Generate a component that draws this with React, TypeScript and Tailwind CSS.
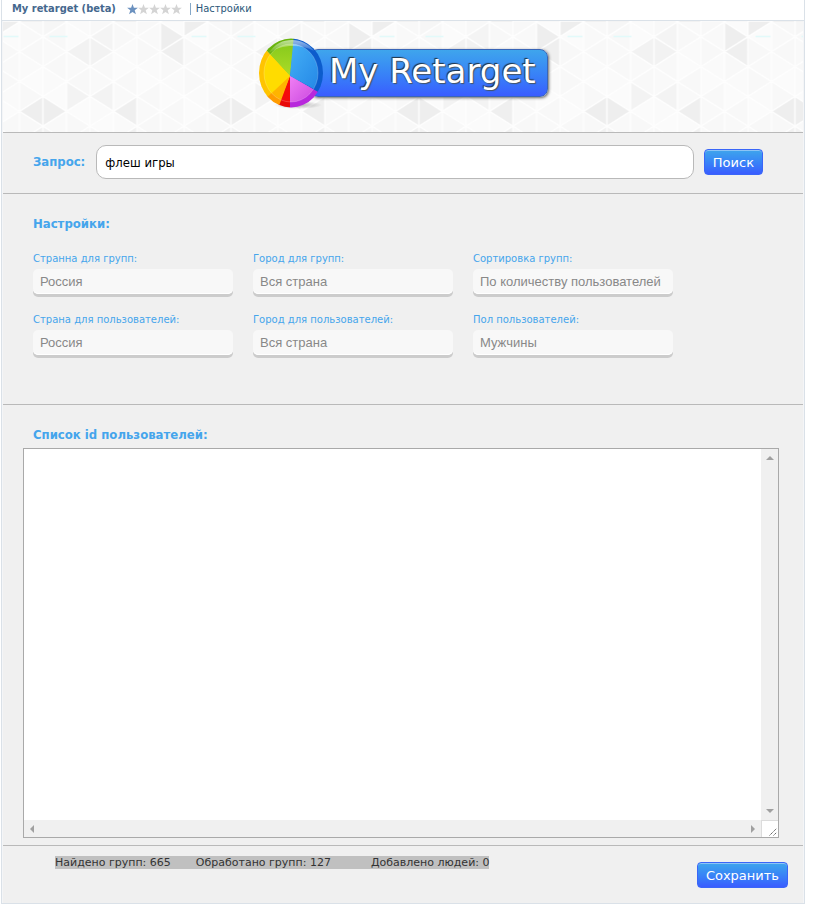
import { useState } from 'react'

// ── Data ─────────────────────────────────────────────────

interface Filter {
  id:      string
  label:   string
  options: string[]
}

const FILTERS: Filter[] = [
  { id: 'group-country', label: 'Странна для групп:',        options: ['Россия'] },
  { id: 'group-city',    label: 'Город для групп:',          options: ['Вся страна'] },
  { id: 'group-sort',    label: 'Сортировка групп:',         options: ['По количеству пользователей'] },
  { id: 'user-country',  label: 'Страна для пользователей:', options: ['Россия'] },
  { id: 'user-city',     label: 'Город для пользователей:',  options: ['Вся страна'] },
  { id: 'user-sex',      label: 'Пол пользователей:',        options: ['Мужчины', 'Женщины'] },
]

// Shaded triangles of one banner tile, keyed "strip:row"
const SHADES: Record<string, string> = {
  '0:6': '#eeeeee', '1:6': '#eeeeee', '4:6': '#efefef',
  '6:1': '#eeeeee', '6:2': '#efefef', '7:0': '#eeeeee',
  '2:2': '#f2f2f2', '3:2': '#f2f2f2', '3:1': '#f4f4f4',
  '2:5': '#f3f3f3', '3:5': '#f3f3f3', '1:0': '#f6f6f6',
  '0:8': '#f1f1f1', '1:8': '#f3f3f3', '4:8': '#f1f1f1',
}

const LIGHT = ['#f8f8f8', '#fafafa', '#f9f9f9', '#fbfbfb', '#f8f8f8']

const STRIP = 23.5
const ROW   = 14.9

// ── Pieces ───────────────────────────────────────────────

function BannerPattern() {
  const tiles = []
  for (let n = 0; n < 8; n++) {
    for (let m = 0; m < 9; m++) {
      const left  = n * STRIP
      const right = left + STRIP
      const y     = m * ROW
      const apexLeft = (n + m) % 2 === 0
      const points = apexLeft
        ? `${left},${y} ${right},${y - ROW} ${right},${y + ROW}`
        : `${right},${y} ${left},${y - ROW} ${left},${y + ROW}`
      tiles.push(
        <polygon
          key={`${n}:${m}`}
          points={points}
          fill={SHADES[`${n}:${m}`] ?? LIGHT[(n * 3 + m * 2) % 5]}
          stroke="#fefefe"
          strokeWidth="1.3"
        />,
      )
    }
  }
  return (
    <svg className="absolute inset-0 h-full w-full" aria-hidden="true">
      <defs>
        <pattern id="triangles" x="16.5" y="1" width="188" height="120" patternUnits="userSpaceOnUse">
          {tiles}
          <path d="M172 14.5h15M30 14.5h18" stroke="#e2fafa" strokeWidth="1.6" />
        </pattern>
      </defs>
      <rect width="100%" height="100%" fill="url(#triangles)" />
    </svg>
  )
}

function Wheel() {
  return (
    <svg width="68" height="74" viewBox="0 0 68 74" className="relative -mr-4 shrink-0" aria-hidden="true">
      <defs>
        <clipPath id="disc"><ellipse cx="33" cy="35" rx="32" ry="34.5" /></clipPath>
        <clipPath id="inner"><ellipse cx="33" cy="35" rx="27" ry="29" /></clipPath>
        <linearGradient id="w-green" x1="0" y1="0" x2="0" y2="1"><stop offset="0" stopColor="#7cc418" /><stop offset="1" stopColor="#acdc28" /></linearGradient>
        <linearGradient id="w-blue" x1="0" y1="0" x2="1" y2="1"><stop offset="0" stopColor="#48b4f8" /><stop offset="1" stopColor="#1878e0" /></linearGradient>
        <linearGradient id="w-pink" x1="0" y1="0" x2="1" y2="1"><stop offset="0" stopColor="#f080f4" /><stop offset="1" stopColor="#b020d0" /></linearGradient>
        <linearGradient id="w-shine" x1="0" y1="0" x2="0" y2="1"><stop offset="0" stopColor="#fff" stopOpacity=".6" /><stop offset="1" stopColor="#fff" stopOpacity="0" /></linearGradient>
        <radialGradient id="w-shadow"><stop offset="0" stopColor="#000" stopOpacity=".3" /><stop offset="1" stopColor="#000" stopOpacity="0" /></radialGradient>
      </defs>
      <ellipse cx="40" cy="67" rx="24" ry="4" fill="url(#w-shadow)" />
      <g clipPath="url(#disc)">
        <path d="M32 38 6 10 0-4h37z" fill="#68b40c" />
        <path d="M32 38 36-4h40v60L68 59z" fill="#0c5ccc" />
        <path d="M32 38 74 62v20H32z" fill="#b828dc" />
        <path d="M32 38v40H16z" fill="#e80808" />
        <path d="M32 38 18 76-2 66z" fill="#ff9c00" />
        <path d="M32 38 4 64-4 58V4l13 9z" fill="#ffc400" />
      </g>
      <g clipPath="url(#inner)">
        <path d="M32 38 6 10 0-4h37z" fill="url(#w-green)" />
        <path d="M32 38 36-4h40v66z" fill="url(#w-blue)" />
        <path d="M32 38 74 62v20H32z" fill="url(#w-pink)" />
        <path d="M32 38v40H16z" fill="#f40c0c" />
        <path d="M32 38 18 76-2 66z" fill="#ffb400" />
        <path d="M32 38 4 64-4 58V4l13 9z" fill="#ffdc00" />
      </g>
      <ellipse cx="33" cy="35" rx="27" ry="29" fill="none" stroke="#fff" strokeOpacity=".2" />
      <path d="M10 16C17 5 25 2 34 2s17 4 22 11C43 6 22 6 10 16z" fill="url(#w-shine)" />
    </svg>
  )
}

function Logo() {
  return (
    <div className="relative flex items-start">
      <Wheel />
      <div className="mt-[11px] flex h-12 w-[238px] items-center rounded-lg border border-[#3a66b8] bg-linear-to-b from-[#3fa5ec] to-[#3a5cff] pb-1 pl-[18px] shadow-[1px_1px_3px_#666]">
        <span className="font-['Comic_Sans_MS','DejaVu_Sans',sans-serif] text-[34px] leading-none whitespace-nowrap text-white [text-shadow:-1px_-1px_1px_#234,1px_1px_1px_#456]">
          My Retarget
        </span>
      </div>
    </div>
  )
}

function Stars() {
  return (
    <span className="ml-[11px] flex" role="img" aria-label="1 / 5">
      {[0, 1, 2, 3, 4].map(i => (
        <svg key={i} width="11" height="11" viewBox="0 0 11 11">
          <path
            d="M5.500 0 6.900 3.800h4L7.700 6.200 8.900 10.300 5.500 8 2.100 10.300 3.300 6.200.100 3.800h4z"
            fill={i === 0 ? '#6b91bf' : '#d4d4d4'}
          />
        </svg>
      ))}
    </span>
  )
}

function ActionButton({ children }: { children: string }) {
  return (
    <button
      type="button"
      className="h-[26px] rounded-[4px] border border-[#3a66f8] bg-linear-to-b from-[#3fa5ec] to-[#3a5cff] px-2 text-[13px] leading-none text-white shadow-[inset_0_1px_0_#8cc4f6]"
    >
      {children}
    </button>
  )
}

function Arrow({ d }: { d: string }) {
  return (
    <svg width="8" height="8" viewBox="0 0 8 8" aria-hidden="true">
      <path d={d} fill="#a0a0a0" />
    </svg>
  )
}

// ── Page ─────────────────────────────────────────────────

export default function App() {
  const [query, setQuery] = useState('флеш игры')
  const [ids, setIds]     = useState('')

  return (
    <div className="mr-5 ml-px border border-t-0 border-[#dae1e8] bg-[#f4f5f7] px-px font-['DejaVu_Sans',sans-serif]">
      {/* Title bar */}
      <header className="-mx-px flex h-[21px] items-center border-b border-[#dae1e8] bg-white pb-0.5 pl-2.5 text-[11px] text-[#45688e]">
        <h1 className="font-['DejaVu_Sans_Condensed','DejaVu_Sans',sans-serif] font-bold">My retarget (beta)</h1>
        <Stars />
        <span className="ml-2 h-3 w-px bg-[#85a8c8]" />
        <a href="#settings" className="ml-[5px] font-['DejaVu_Sans_Condensed','DejaVu_Sans',sans-serif] text-[#2b587a]">Настройки</a>
      </header>

      <div className="relative flex h-28 justify-center overflow-hidden border-b border-[#b9b9b9] bg-[#fafafa] pt-[17px]">
        <BannerPattern />
        <Logo />
      </div>

      <main className="bg-[#f0f0f0]">
        {/* Search */}
        <form className="flex h-[61px] items-center border-b border-[#b9b9b9] pr-10 pb-0.5 pl-[30px]" onSubmit={e => e.preventDefault()}>
          <label htmlFor="query" className="font-['DejaVu_Sans_Condensed','DejaVu_Sans',sans-serif] text-[13px] font-bold text-[#45a5ec]">Запрос:</label>
          <input
            id="query"
            type="text"
            value={query}
            onChange={e => setQuery(e.target.value)}
            className="mr-2.5 ml-[11px] h-[34px] min-w-0 flex-1 rounded-[10px] border border-[#b9b9b9] bg-white px-2 font-['DejaVu_Sans_Condensed','DejaVu_Sans',sans-serif] text-[13px] text-black outline-none"
          />
          <ActionButton>Поиск</ActionButton>
        </form>

        {/* Filters */}
        <section id="settings" className="h-[211px] border-b border-[#b9b9b9] px-[30px] pt-5">
          <h2 className="font-['DejaVu_Sans_Condensed','DejaVu_Sans',sans-serif] text-[13px] leading-5 font-bold text-[#45a5ec]">Настройки:</h2>
          <div className="mt-[19px] flex max-w-[660px] flex-wrap gap-x-5 gap-y-5">
            {FILTERS.map(f => (
              <div key={f.id} className="w-[200px]">
                <label htmlFor={f.id} className="block h-4 text-[10px] leading-3 whitespace-nowrap text-[#45a5ec]">{f.label}</label>
                <select
                  id={f.id}
                  className="block h-[25px] w-full appearance-none rounded-[5px] bg-[#f8f8f8] px-[7px] font-['Liberation_Sans',sans-serif] text-[13px] text-[#888] shadow-[0_3px_0_#ccc,inset_0_-1px_0_#fff] outline-none"
                >
                  {f.options.map(o => <option key={o}>{o}</option>)}
                </select>
              </div>
            ))}
          </div>
        </section>

        {/* Result list */}
        <section className="border-b border-[#b9b9b9] pt-5 pr-6 pb-[7px] pl-5">
          <label htmlFor="ids" className="block pl-2.5 font-['DejaVu_Sans_Condensed','DejaVu_Sans',sans-serif] text-[13px] leading-5 font-bold text-[#45a5ec]">Список id пользователей:</label>
          <div className="mt-[3px] grid h-[390px] grid-cols-[1fr_17px] grid-rows-[1fr_17px] border border-[#a9a9a9] bg-[#f0f0f0]">
            <textarea
              id="ids"
              value={ids}
              onChange={e => setIds(e.target.value)}
              className="resize-none overflow-hidden bg-white p-0.5 text-[13px] outline-none"
            />
            <div className="flex flex-col items-center justify-between py-[5px]">
              <Arrow d="M0 6 4 2l4 4z" />
              <Arrow d="M0 2h8L4 6z" />
            </div>
            <div className="flex items-center justify-between px-1">
              <Arrow d="M6 0v8L2 4z" />
              <Arrow d="M2 0v8l4-4z" />
            </div>
            <svg width="17" height="17" viewBox="0 0 17 17" aria-hidden="true">
              <path d="M0 0h17v17H0z" fill="#fff" />
              <path d="M0 .5h17M.5 0v17" stroke="#dcdcdc" />
              <path d="m8.500 15.500 7-7M12.500 15.500l3-3" stroke="#666" strokeDasharray="1.500 .5" />
            </svg>
          </div>
        </section>

        {/* Progress */}
        <footer className="flex h-[57px] items-start justify-between pr-[15px] pl-[52px] text-[11px]">
          <p className="mt-2.5 flex bg-[#c0c0c0] leading-[13px] whitespace-nowrap text-[#333]">
            <span className="mr-[25px]">Найдено групп: 665</span>
            <span className="mr-10">Обработано групп: 127</span>
            <span>Добавлено людей: 0</span>
          </p>
          <div className="mt-4"><ActionButton>Сохранить</ActionButton></div>
        </footer>
      </main>
    </div>
  )
}
